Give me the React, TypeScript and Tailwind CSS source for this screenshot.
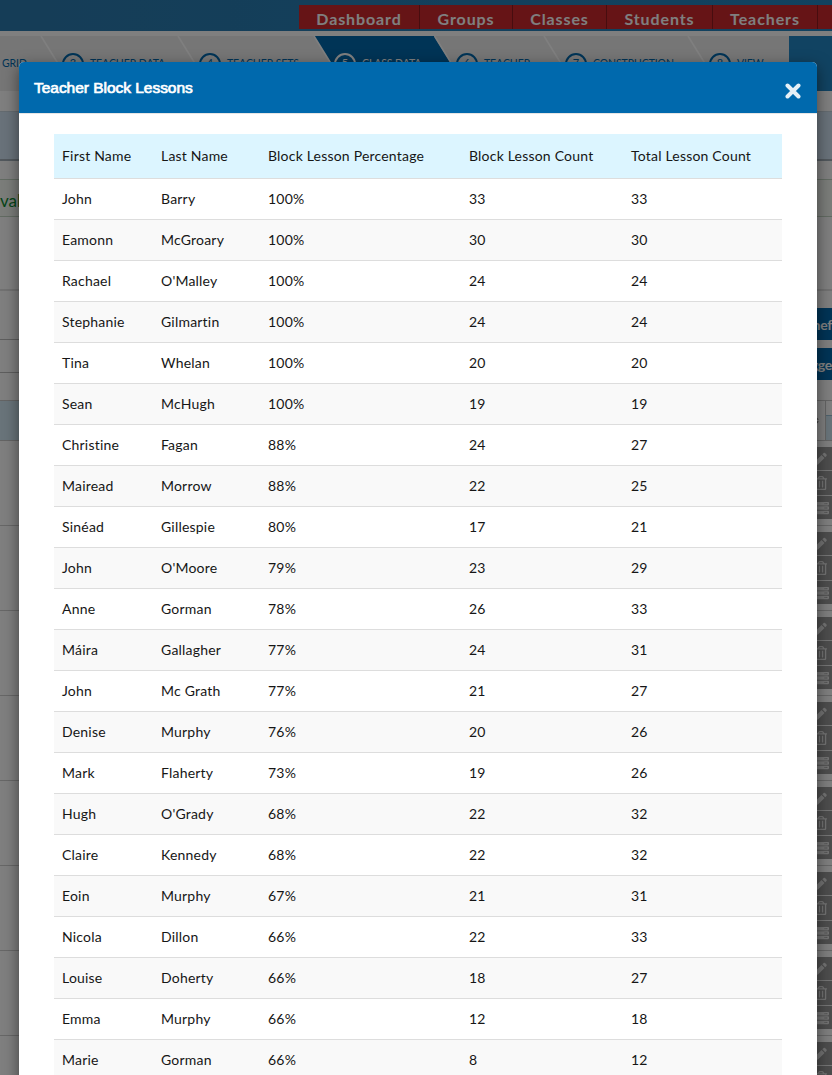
import { FaRegTrashAlt, FaServer, FaSort } from "react-icons/fa";

interface Lesson {
  first: string;
  last: string;
  percentage: number;
  block: number;
  total: number;
}

interface Step {
  no: number;
  label: string;
  spacing: string;
}

const lessons: Lesson[] = [
  { first: "John", last: "Barry", percentage: 100, block: 33, total: 33 },
  { first: "Eamonn", last: "McGroary", percentage: 100, block: 30, total: 30 },
  { first: "Rachael", last: "O'Malley", percentage: 100, block: 24, total: 24 },
  { first: "Stephanie", last: "Gilmartin", percentage: 100, block: 24, total: 24 },
  { first: "Tina", last: "Whelan", percentage: 100, block: 20, total: 20 },
  { first: "Sean", last: "McHugh", percentage: 100, block: 19, total: 19 },
  { first: "Christine", last: "Fagan", percentage: 88, block: 24, total: 27 },
  { first: "Mairead", last: "Morrow", percentage: 88, block: 22, total: 25 },
  { first: "Sinéad", last: "Gillespie", percentage: 80, block: 17, total: 21 },
  { first: "John", last: "O'Moore", percentage: 79, block: 23, total: 29 },
  { first: "Anne", last: "Gorman", percentage: 78, block: 26, total: 33 },
  { first: "Máira", last: "Gallagher", percentage: 77, block: 24, total: 31 },
  { first: "John", last: "Mc Grath", percentage: 77, block: 21, total: 27 },
  { first: "Denise", last: "Murphy", percentage: 76, block: 20, total: 26 },
  { first: "Mark", last: "Flaherty", percentage: 73, block: 19, total: 26 },
  { first: "Hugh", last: "O'Grady", percentage: 68, block: 22, total: 32 },
  { first: "Claire", last: "Kennedy", percentage: 68, block: 22, total: 32 },
  { first: "Eoin", last: "Murphy", percentage: 67, block: 21, total: 31 },
  { first: "Nicola", last: "Dillon", percentage: 66, block: 22, total: 33 },
  { first: "Louise", last: "Doherty", percentage: 66, block: 18, total: 27 },
  { first: "Emma", last: "Murphy", percentage: 66, block: 12, total: 18 },
  { first: "Marie", last: "Gorman", percentage: 66, block: 8, total: 12 },
];

const navItems = [
  { label: "Dashboard", width: "w-[121px]" },
  { label: "Groups", width: "w-[93px]" },
  { label: "Classes", width: "w-[94px]" },
  { label: "Students", width: "w-[106px]" },
  { label: "Teachers", width: "w-[105px]" },
];

const steps: Step[] = [
  { no: 3, label: "TEACHER DATA", spacing: "w-[137px] pl-[21px]" },
  { no: 4, label: "TEACHER SETS", spacing: "w-[136px] pl-[21px]" },
  { no: 5, label: "CLASS DATA", spacing: "w-[120px] pl-[20px]" },
  { no: 6, label: "TEACHER", spacing: "w-[110px] pl-[22px]" },
  { no: 7, label: "CONSTRUCTION", spacing: "w-[144px] pl-[21px]" },
  { no: 8, label: "VIEW", spacing: "w-[101px] pl-[21px]" },
];

function TopBar() {
  return (
    <header className="h-[31px] bg-linear-to-r from-[#2b7aae] to-[#2385c0] flex pl-[299px] pt-[5px]">
      <nav className="h-6 flex shrink-0 bg-[#cc282d] text-white font-bold text-[16px] tracking-[0.9px] leading-[28px]">
        {navItems.map((item) => (
          <a key={item.label} className={`${item.width} text-center border-r border-[#8e1a1e]`}>
            {item.label}
          </a>
        ))}
        <span className="w-4" />
      </nav>
    </header>
  );
}

function StepBar() {
  return (
    <div className="mt-[5px] h-[55px] flex bg-[#2286c4]">
      <div className="relative w-[789px] bg-[#ededed] shrink-0">
        {/* arrow shapes behind the labels */}
        <svg className="absolute inset-0" width="789" height="55">
          <path d="M314 0H434L451 27.5L434 55H314L331 27.5Z" fill="#0069ad" />
          <g fill="none" stroke="#fff" strokeWidth="1.6">
            <path d="M41 0L58 27.5L41 55" />
            <path d="M178 0L195 27.5L178 55" />
            <path d="M314 0L331 27.5L314 55" />
            <path d="M434.500 0L451.500 27.5L434.500 55" />
            <path d="M544 0L561 27.5L544 55" />
            <path d="M688 0L705 27.5L688 55" />
          </g>
        </svg>
        <div className="relative h-full flex items-center text-[10.5px] tracking-[-0.1px] text-[#0069ad]">
          <span className="w-[41px] pl-[2px]">GRID</span>
          {steps.map((s) => (
            <div
              key={s.no}
              className={`${s.spacing} flex items-center gap-[6px] whitespace-nowrap ${s.no === 5 ? "text-white" : ""}`}
            >
              <span className="size-[22px] rounded-full border-2 border-current flex items-center justify-center text-[11px]">
                {s.no}
              </span>
              {s.label}
            </div>
          ))}
        </div>
      </div>
    </div>
  );
}

function PencilIcon() {
  return (
    <svg width="13" height="14" viewBox="0 0 13 14" fill="currentColor" className="-ml-[2px]">
      <path d="M0 13.500L1 9.500L7.500 3L10.500 6L4 12.500Z" />
      <path d="M8.300 2.200L9.600 0.900Q10.300 0.400 11 0.900L12.500 2.400Q13 3.200 12.500 3.900L11.200 5.200Z" />
    </svg>
  );
}

function RowActions() {
  return (
    <div className="w-4 h-[72px] bg-[#9a9a9a] text-[#e6e6e6] flex flex-col">
      <div className="h-6 flex items-center border-b border-[#ededed]">
        <PencilIcon />
      </div>
      <div className="h-[25px] flex items-center border-b border-[#ededed]">
        <FaRegTrashAlt size={14} className="-ml-[2px]" />
      </div>
      <div className="h-[23px] flex items-center">
        <FaServer size={14} className="-ml-[1px]" />
      </div>
    </div>
  );
}

function SideButton({ label }: { label: string }) {
  return (
    <div className="w-10 h-8 shrink-0 bg-[#0069ad] text-white font-bold text-[14px] leading-[33px] text-right tracking-[-0.3px]">
      {label}
    </div>
  );
}

function PageBehind() {
  return (
    <div className="bg-white">
      <TopBar />
      <StepBar />
      <div className="mt-5 h-[50px] bg-[#d3e5f4] border-t border-b-2 border-t-[#c8d6e0] border-b-[#a5b1ba]" />
      <div className="mt-[18px] h-[38px] border-y border-[#c5d6c5] bg-[#f7faf4] text-[#0b8a32] text-[17px] leading-[42px]">
        val
      </div>
      <div className="h-[74px] border-b-2 border-[#e3e3e3]" />
      <div className="h-[49px] border-b border-[#bdbdbd] flex justify-end pt-[17px]">
        <SideButton label="nef" />
      </div>
      <div className="h-[33px] border-b border-[#bdbdbd] flex justify-end pt-2">
        <SideButton label="gge" />
      </div>
      <div className="mt-[27px] h-[41px] flex justify-between border-y border-[#c9c9c9] bg-white">
        <div className="w-[100px] bg-[#d3e9f5]" />
        <div className="w-[20px] flex bg-white">
          <div className="w-[14px] border-r border-[#c9c9c9] flex items-center">
            <FaSort size={11} color="#777777" className="-ml-[2px]" />
          </div>
          <div className="grow mt-[14px] bg-[#d3e9f5] border-t border-[#9cc0d6]" />
        </div>
      </div>
      {[0, 1, 2, 3, 4, 5, 6, 7].map((row) => (
        <div key={row} className="h-[85px] border-b border-[#cfcfcf] flex justify-end pt-[6px]">
          <RowActions />
        </div>
      ))}
    </div>
  );
}

export default function App() {
  const th = "px-2 text-left font-normal";
  const td = "px-2 border-t border-[#dddddd]";

  return (
    <div className="relative w-[832px] h-[1075px] overflow-hidden font-[Lato,sans-serif] text-[#161616]">
      <PageBehind />
      <div className="absolute inset-0 bg-black/50">
        <div className="ml-[19px] mt-[62px] w-[798px] h-[1100px] bg-white rounded-t-[5px] shadow-[0_5px_15px_rgba(0,0,0,0.5)]">
          <div className="h-[52px] rounded-t-[5px] bg-[#0069ad] border-b border-[#e5e5e5] flex items-start justify-between pl-[15px] pr-4">
            <h4 className="mt-[15px] text-[15.5px] leading-[22px] tracking-[-0.03px] [-webkit-text-stroke:0.7px_white] text-white font-['Liberation_Sans',Arial,sans-serif]">
              Teacher Block Lessons
            </h4>
            <button className="mt-[19px] text-[#e5f0f7]">
              <svg width="16" height="20" viewBox="0 0 16 20" stroke="currentColor" strokeWidth="4">
                <path d="M2.500 4.500L13.500 15.500M13.500 4.500L2.500 15.500" strokeLinecap="round" />
              </svg>
            </button>
          </div>
          <table className="ml-[35px] mt-5 w-[728px] table-fixed border-collapse text-[14px] tracking-[0.2px]">
            <colgroup>
              <col className="w-[99px]" />
              <col className="w-[107px]" />
              <col className="w-[201px]" />
              <col className="w-[162px]" />
              <col />
            </colgroup>
            <thead>
              <tr className="h-[44px] bg-[#dcf5ff]">
                <th className={th}>First Name</th>
                <th className={th}>Last Name</th>
                <th className={th}>Block Lesson Percentage</th>
                <th className={th}>Block Lesson Count</th>
                <th className={th}>Total Lesson Count</th>
              </tr>
            </thead>
            <tbody>
              {lessons.map((l, i) => (
                <tr key={i} className="h-[41px] even:bg-[#f9f9f9]">
                  <td className={td}>{l.first}</td>
                  <td className={td}>{l.last}</td>
                  <td className={td}>{l.percentage}%</td>
                  <td className={td}>{l.block}</td>
                  <td className={td}>{l.total}</td>
                </tr>
              ))}
            </tbody>
          </table>
        </div>
      </div>
    </div>
  );
}
